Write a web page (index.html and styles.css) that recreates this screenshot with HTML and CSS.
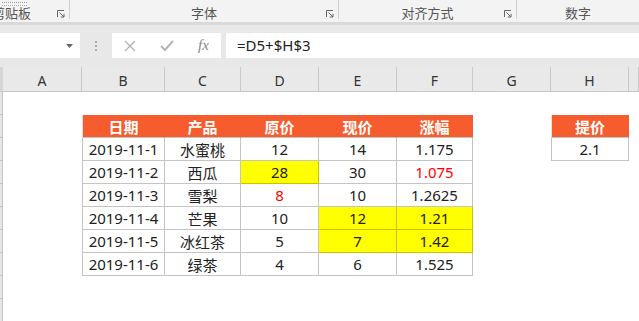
FILE: index.html
```html
<!DOCTYPE html>
<html lang="zh-CN">
<head>
    <meta charset="UTF-8">
    <title>涨幅表</title>
    <link rel="stylesheet" href="styles.css">
</head>
<body>

<div class="ribbon">
    <div class="group group-clip">
        <span class="tiny-label"></span>
        <span class="group-label">剪贴板</span>
        <svg class="launcher" width="8" height="8" viewBox="0 0 8 8"><path d="M0.5 7V0.5H7M2.5 2.5L7 7M7 3.8V7H3.8" fill="none" stroke="#666" stroke-width="1"/></svg>
    </div>
    <div class="group group-font">
        <span class="group-label">字体</span>
        <svg class="launcher" width="8" height="8" viewBox="0 0 8 8"><path d="M0.5 7V0.5H7M2.5 2.5L7 7M7 3.8V7H3.8" fill="none" stroke="#666" stroke-width="1"/></svg>
    </div>
    <div class="group group-align">
        <span class="group-label">对齐方式</span>
        <svg class="launcher" width="8" height="8" viewBox="0 0 8 8"><path d="M0.5 7V0.5H7M2.5 2.5L7 7M7 3.8V7H3.8" fill="none" stroke="#666" stroke-width="1"/></svg>
    </div>
    <div class="group group-number">
        <span class="group-label">数字</span>
    </div>
</div>

<div class="formula-bar">
    <div class="name-box">
        <svg width="7" height="4" viewBox="0 0 7 4"><path d="M0 0H7L3.5 4Z" fill="#666"/></svg>
    </div>
    <div class="grip"><i></i><i></i><i></i></div>
    <div class="fx-buttons">
        <svg width="12" height="12" viewBox="0 0 12 12"><path d="M1 1L11 11M11 1L1 11" stroke="#b3b3b3" stroke-width="1.3" fill="none"/></svg>
        <svg width="14" height="11" viewBox="0 0 14 11"><path d="M1 6L5 10L13 1" stroke="#b3b3b3" stroke-width="2" fill="none"/></svg>
        <span class="fx">fx</span>
    </div>
    <div class="formula-input">=D5+$H$3</div>
</div>

<div class="sheet">
    <!-- column headers -->
    <div class="corner"></div>
    <div class="colhead">A</div>
    <div class="colhead">B</div>
    <div class="colhead">C</div>
    <div class="colhead">D</div>
    <div class="colhead">E</div>
    <div class="colhead">F</div>
    <div class="colhead">G</div>
    <div class="colhead">H</div>
    <div class="colhead"></div>

    <!-- row 1 -->
    <div class="rowhead"></div>
    <div></div><div></div><div></div><div></div><div></div><div></div><div></div><div></div><div></div>

    <!-- row 2 -->
    <div class="rowhead"></div>
    <div></div>
    <div class="cell th first">日期</div>
    <div class="cell th">产品</div>
    <div class="cell th">原价</div>
    <div class="cell th">现价</div>
    <div class="cell th">涨幅</div>
    <div></div>
    <div class="cell th first">提价</div>
    <div></div>

    <!-- row 3 -->
    <div class="rowhead"></div>
    <div></div>
    <div class="cell first">2019-11-1</div>
    <div class="cell">水蜜桃</div>
    <div class="cell">12</div>
    <div class="cell">14</div>
    <div class="cell">1.175</div>
    <div></div>
    <div class="cell first">2.1</div>
    <div></div>

    <!-- row 4 -->
    <div class="rowhead"></div>
    <div></div>
    <div class="cell first">2019-11-2</div>
    <div class="cell">西瓜</div>
    <div class="cell yellow">28</div>
    <div class="cell">30</div>
    <div class="cell red">1.075</div>
    <div></div><div></div><div></div>

    <!-- row 5 -->
    <div class="rowhead"></div>
    <div></div>
    <div class="cell first">2019-11-3</div>
    <div class="cell">雪梨</div>
    <div class="cell red">8</div>
    <div class="cell">10</div>
    <div class="cell">1.2625</div>
    <div></div><div></div><div></div>

    <!-- row 6 -->
    <div class="rowhead"></div>
    <div></div>
    <div class="cell first">2019-11-4</div>
    <div class="cell">芒果</div>
    <div class="cell">10</div>
    <div class="cell yellow">12</div>
    <div class="cell yellow">1.21</div>
    <div></div><div></div><div></div>

    <!-- row 7 -->
    <div class="rowhead"></div>
    <div></div>
    <div class="cell first">2019-11-5</div>
    <div class="cell">冰红茶</div>
    <div class="cell">5</div>
    <div class="cell yellow">7</div>
    <div class="cell yellow">1.42</div>
    <div></div><div></div><div></div>

    <!-- row 8 -->
    <div class="rowhead"></div>
    <div></div>
    <div class="cell first">2019-11-6</div>
    <div class="cell">绿茶</div>
    <div class="cell">4</div>
    <div class="cell">6</div>
    <div class="cell">1.525</div>
    <div></div><div></div><div></div>

    <!-- rows 9, 10 -->
    <div class="rowhead"></div>
    <div></div><div></div><div></div><div></div><div></div><div></div><div></div><div></div><div></div>
    <div class="rowhead"></div>
    <div></div><div></div><div></div><div></div><div></div><div></div><div></div><div></div><div></div>
</div>

</body>
</html>
```

FILE: styles.css
```css
* {
    margin: 0;
    padding: 0;
    box-sizing: border-box;
}

body {
    width: 639px;
    height: 321px;
    overflow: hidden;
    background: #fff;
    font-family: "Noto Sans", "Noto Sans CJK SC", sans-serif;
    color: #222;
}

/* ribbon */
.ribbon {
    height: 22px;
    display: flex;
    background: #f3f3f3;
}

.group {
    position: relative;
    flex-shrink: 0;
    display: flex;
    align-items: center;
    justify-content: center;
    border-right: 1px solid #cfcfcf;
    height: 19px;
}

.group-clip {
    width: 70px;
    justify-content: flex-start;
}

.group-clip .group-label {
    margin-left: -8px;
}

.group-font { width: 269px; }
.group-align { width: 178px; }
.group-number { flex: 1; border-right: none; }

.group-label {
    font-size: 13px;
    color: #555;
    margin-top: 6px;
}

.tiny-label {
    position: absolute;
    left: 2px;
    top: 2px;
    width: 25px;
    height: 4px;
    border-top: 1px dotted #999;
    border-bottom: 1px dotted #aaa;
}

.launcher {
    position: absolute;
    right: 4px;
    top: 10px;
}

/* formula bar */
.formula-bar {
    height: 45px;
    background: #e8e8e8;
    border-top: 3px solid #d9d9d9;
    display: flex;
    align-items: flex-start;
    padding-top: 8px;
}

.name-box {
    width: 80px;
    height: 25px;
    background: #fff;
    display: flex;
    align-items: center;
    justify-content: flex-end;
    padding-right: 7px;
}

.grip {
    width: 32px;
    height: 25px;
    display: flex;
    flex-direction: column;
    align-items: center;
    justify-content: center;
    gap: 2px;
}

.grip i {
    width: 2px;
    height: 2px;
    background: #aaa;
}

.fx-buttons {
    width: 109px;
    height: 25px;
    background: #fff;
    display: flex;
    align-items: center;
    padding-left: 12px;
    gap: 24px;
}

.fx {
    font-family: "Liberation Serif", serif;
    font-style: italic;
    font-size: 15px;
    color: #888;
}

.formula-input {
    flex: 1;
    height: 25px;
    margin-left: 5px;
    background: #fff;
    font-size: 15px;
    line-height: 25px;
    padding-left: 11px;
    color: #222;
}

/* sheet */
.sheet {
    display: grid;
    grid-template-columns: 3px 79px 83px 76px 78px 78px 76px 78px 78px 10px;
    grid-template-rows: 25px repeat(10, 23px);
}

.corner {
    background: #d6d6d6;
    border-bottom: 1px solid #c6c6c6;
}

.colhead {
    background: #e9e9e9;
    border-right: 1px solid #c9c9c9;
    border-bottom: 1px solid #c6c6c6;
    font-size: 14px;
    color: #333;
    display: flex;
    align-items: center;
    justify-content: center;
    padding-top: 3px;
}

.rowhead {
    background: #e6e6e6;
    border-right: 1px solid #c4c4c4;
    border-bottom: 1px solid #c4c4c4;
}

.cell {
    font-size: 15px;
    display: flex;
    align-items: center;
    justify-content: center;
    border-right: 1px solid #c4c4c4;
    border-bottom: 1px solid #c4c4c4;
    white-space: nowrap;
}

.cell.first {
    border-left: 1px solid #c4c4c4;
}

.cell.th {
    background: #f65c2d;
    color: #fff;
    font-weight: bold;
    border-color: #f65c2d;
    border-bottom-color: #c4c4c4;
}

.cell.th.first {
    border-left-color: #e0e0e0;
}

.yellow {
    background: #ffff00;
}

.cell.yellow {
    border-color: #c8c400;
}

.red {
    color: #ff0000;
}
```
